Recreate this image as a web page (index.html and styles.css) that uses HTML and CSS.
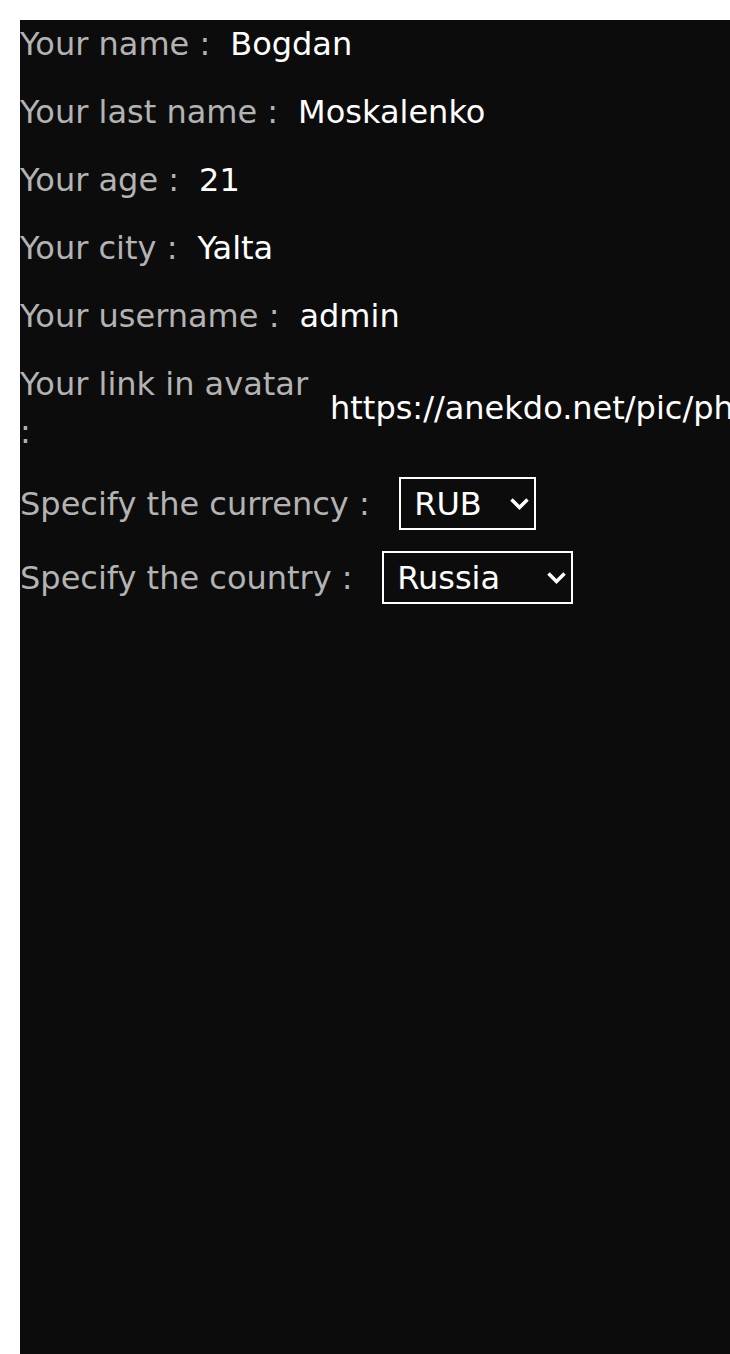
FILE: index.html
```html
<!DOCTYPE html>
<html lang="en">
<head>
<meta charset="utf-8">
<title>Profile</title>
<link rel="stylesheet" href="styles.css">
</head>
<body>
<main class="panel">
  <div class="row"><span class="label">Your name :</span><span class="value">Bogdan</span></div>
  <div class="row"><span class="label">Your last name :</span><span class="value">Moskalenko</span></div>
  <div class="row"><span class="label">Your age :</span><span class="value">21</span></div>
  <div class="row"><span class="label">Your city :</span><span class="value">Yalta</span></div>
  <div class="row"><span class="label">Your username :</span><span class="value">admin</span></div>
  <div class="row row-link"><span class="label label-wrap">Your link in avatar :</span><span class="value">https://anekdo.net/pic/photo/avatar.jpg</span></div>
  <div class="row row-select">
    <span class="label">Specify the currency :</span>
    <span class="select-wrap">
      <select class="select select-currency">
        <option>RUB</option>
        <option>USD</option>
        <option>UAH</option>
      </select>
      <svg class="chevron" viewBox="0 0 19 12" width="19" height="12" aria-hidden="true"><polyline points="1.5,1.5 9.5,9.5 17.5,1.5" fill="none" stroke="#ffffff" stroke-width="3.5"/></svg>
    </span>
  </div>
  <div class="row row-select">
    <span class="label">Specify the country :</span>
    <span class="select-wrap">
      <select class="select select-country">
        <option>Russia</option>
        <option>Ukraine</option>
      </select>
      <svg class="chevron" viewBox="0 0 19 12" width="19" height="12" aria-hidden="true"><polyline points="1.5,1.5 9.5,9.5 17.5,1.5" fill="none" stroke="#ffffff" stroke-width="3.5"/></svg>
    </span>
  </div>
</main>
</body>
</html>
```

FILE: styles.css
```css
html, body {
  margin: 0;
  padding: 0;
  background: #ffffff;
}

body {
  overflow: hidden;
  font-family: "DejaVu Sans", "Liberation Sans", sans-serif;
}

.panel {
  margin: 20px 0 0 20px;
  min-height: 1334px;
  background: #0c0c0c;
  overflow: hidden;
  display: flex;
  flex-direction: column;
  gap: 20px;
  font-size: 32px;
  line-height: 48px;
}

.row {
  display: flex;
  align-items: center;
  gap: 20px;
  white-space: nowrap;
}

.row-link {
  gap: 14px;
}

.row-select {
  margin-top: 1px;
  gap: 29.5px;
}

.label {
  color: #b3b3b3;
  flex-shrink: 0;
}

.label-wrap {
  width: 296px;
  white-space: normal;
}

.value {
  color: #ffffff;
  flex-shrink: 0;
}

.select-wrap {
  position: relative;
  display: flex;
}

.select {
  box-sizing: border-box;
  height: 53px;
  font-family: inherit;
  font-size: 32px;
  color: #ffffff;
  background: #0c0c0c;
  border: 2px solid #ffffff;
  border-radius: 0;
  padding: 0 30px 0 13px;
  margin: 0;
  appearance: none;
  -webkit-appearance: none;
}

.chevron {
  position: absolute;
  right: 7px;
  top: 50%;
  margin-top: -6px;
  pointer-events: none;
}

.select-currency {
  width: 137px;
}

.select-country {
  width: 191px;
}
```
